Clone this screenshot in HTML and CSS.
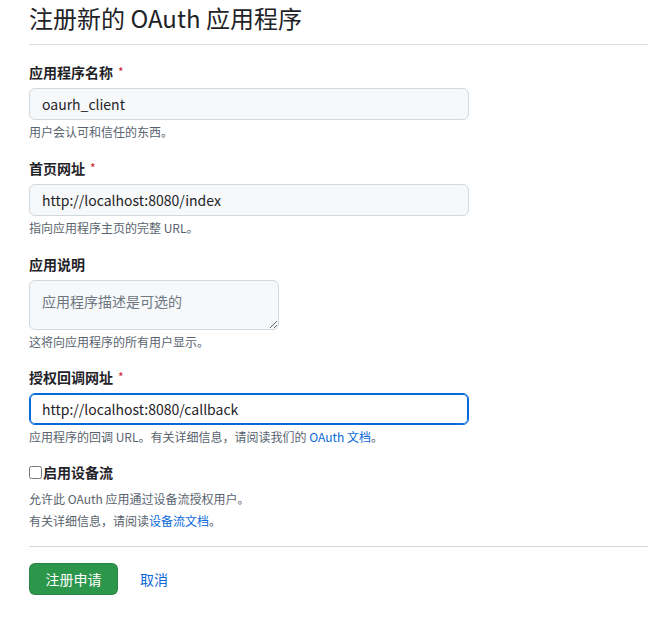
FILE: index.html
```html
<!DOCTYPE html>
<html lang="zh-CN">
<head>
<meta charset="utf-8">
<title>注册新的 OAuth 应用程序</title>
<link rel="stylesheet" href="styles.css">
</head>
<body>
<div class="page">
  <h1 class="title">注册新的 OAuth 应用程序</h1>
  <form class="form">
    <div class="group">
      <label class="label">应用程序名称 <span class="req">*</span></label>
      <input class="input" type="text" value="oaurh_client">
      <p class="hint">用户会认可和信任的东西。</p>
    </div>
    <div class="group">
      <label class="label">首页网址 <span class="req">*</span></label>
      <input class="input" type="text" value="http://localhost:8080/index">
      <p class="hint">指向应用程序主页的完整 URL。</p>
    </div>
    <div class="group">
      <label class="label">应用说明</label>
      <textarea class="textarea" placeholder="应用程序描述是可选的"></textarea>
      <p class="hint hint-ta">这将向应用程序的所有用户显示。</p>
    </div>
    <div class="group group-cb">
      <label class="label">授权回调网址 <span class="req">*</span></label>
      <input class="input focused" type="text" value="http://localhost:8080/callback">
      <p class="hint">应用程序的回调 URL。有关详细信息，请阅读我们的 <a class="link" href="#">OAuth 文档</a>。</p>
    </div>
    <div class="group group-check">
      <label class="check-label"><input class="check" type="checkbox">启用设备流</label>
      <p class="hint hint-multi">允许此 OAuth 应用通过设备流授权用户。<br>有关详细信息，请阅读<a class="link" href="#">设备流文档</a>。</p>
    </div>
    <div class="actions">
      <button class="btn" type="button">注册申请</button>
      <a class="cancel" href="#">取消</a>
    </div>
  </form>
</div>
</body>
</html>
```

FILE: styles.css
```css
* { box-sizing: border-box; }
html, body { margin: 0; padding: 0; background: #ffffff; }
body {
  font-family: "Noto Sans CJK SC", "Noto Sans", sans-serif;
  color: #1f2328;
  font-size: 14px;
}
.page { padding-left: 29px; }
.title {
  margin: 0;
  font-size: 24px;
  font-weight: 400;
  line-height: 36px;
  height: 45px;
  padding-bottom: 8px;
  border-bottom: 1px solid #d8dee4;
}
.form { display: flex; flex-direction: column; }
.group { display: flex; flex-direction: column; align-items: flex-start; margin-top: 17px; }
.group-cb { margin-top: 16px; }
.group-check { margin-top: 16px; }
.label {
  display: flex;
  align-items: center;
  height: 20px;
  font-size: 14px;
  font-weight: 700;
  line-height: 20px;
  margin-bottom: 6px;
}
.req { color: #d1242f; font-weight: 400; font-size: 12px; line-height: 1; margin-left: 5px; }
.input {
  width: 440px;
  height: 32px;
  padding: 0 12px;
  font: inherit;
  font-size: 14px;
  color: #1f2328;
  background: #f6f8fa;
  border: 1px solid #d1d9e0;
  border-radius: 6px;
  outline: none;
  display: block;
}
.input.focused {
  background: #ffffff;
  border-color: #0969da;
  box-shadow: inset 0 0 0 1px #0969da;
}
.textarea {
  width: 250px;
  height: 50px;
  padding: 10px 12px;
  font: inherit;
  font-size: 14px;
  line-height: 20px;
  background: #f6f8fa;
  border: 1px solid #d1d9e0;
  border-radius: 6px;
  outline: none;
  resize: vertical;
  display: block;
}
.textarea::placeholder { color: #6e7781; }
.hint {
  margin: 3px 0 0;
  font-size: 12px;
  line-height: 18px;
  height: 18px;
  color: #59636e;
}
.hint-ta { margin-top: 3px; }
.hint-multi { margin-top: 6px; line-height: 22px; height: 44px; }
.link { color: #0969da; text-decoration: none; }
.check-label {
  display: flex;
  align-items: center;
  height: 20px;
  font-size: 14px;
  font-weight: 700;
  line-height: 20px;
}
.check { margin: 0 1px 0 0; width: 13px; height: 13px; }
.actions {
  margin-top: 14px;
  border-top: 1px solid #d1d9e0;
  padding-top: 16px;
  display: flex;
  align-items: center;
  gap: 22px;
}
.btn {
  width: 89px;
  height: 32px;
  font: inherit;
  font-size: 14px;
  color: #ffffff;
  background: #2c974b;
  border: 1px solid rgba(31, 35, 40, 0.15);
  border-radius: 6px;
}
.cancel { color: #0969da; text-decoration: none; font-size: 14px; }
```
